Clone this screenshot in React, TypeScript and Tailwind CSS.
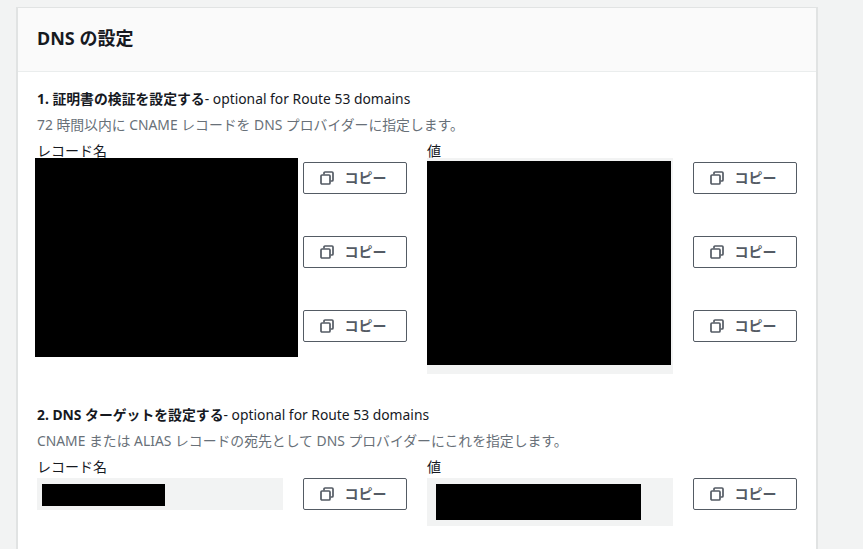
const font = 'font-["Noto_Sans","Noto_Sans_CJK_JP",sans-serif]';

function CopyButton() {
  return (
    <button className="flex h-8 w-[104px] items-center justify-center gap-[11px] rounded-[2px] border border-[#545b64] bg-white pr-1 text-[14px] leading-none font-bold text-[#545b64]">
      <svg width="14" height="14" viewBox="0 0 14 14" fill="none" stroke="#545b64" strokeWidth="1.7">
        <rect x="1" y="4" width="9" height="9" rx="1" />
        <path d="M4 3.5V2a1 1 0 0 1 1-1h7a1 1 0 0 1 1 1v7a1 1 0 0 1-1 1h-1.5" />
      </svg>
      <span>コピー</span>
    </button>
  );
}

function Label({ children }: { children: string }) {
  return <div className="h-[15px] text-[14px] leading-[15px] text-[#16191f]">{children}</div>;
}

function Section({ num, title, desc }: { num: string; title: string; desc: string }) {
  return (
    <>
      <div className="h-[20px] text-[13.85px] leading-[20px] text-[#16191f]">
        <span className="font-bold">
          {num} {title}
        </span>
        <span>- optional for Route 53 domains</span>
      </div>
      <div className="mt-[6px] h-[20px] text-[13.85px] leading-[20px] text-[#687078]">{desc}</div>
    </>
  );
}

export default function App() {
  return (
    <div className={`${font} h-[549px] w-[863px] overflow-hidden bg-[#f2f3f3] pt-[7px] pl-[16px]`}>
      <div className="h-[560px] w-[802px] border-t border-r-2 border-l-2 border-[#e1e3e3] bg-white">
        <div className="flex h-[64px] items-center border-b border-[#eaeded] bg-[#fafafa] pb-[3px] pl-[19px]">
          <h2 className="text-[18px] leading-6 font-bold text-[#16191f]">DNS の設定</h2>
        </div>

        <div className="pt-[17px] pl-[19px]">
          <Section
            num="1."
            title="証明書の検証を設定する"
            desc="72 時間以内に CNAME レコードを DNS プロバイダーに指定します。"
          />
          <div className="mt-[8px] grid grid-cols-[246px_104px_246px_104px] gap-x-5">
            <div>
              <Label>レコード名</Label>
              <div className="relative h-[199px]">
                <div className="absolute top-0 -left-[2px] h-[199px] w-[263px] bg-black" />
              </div>
            </div>
            <div className="flex flex-col gap-[42px] pt-[19px]">
              <CopyButton />
              <CopyButton />
              <CopyButton />
            </div>
            <div>
              <Label>値</Label>
              <div className="h-[216px] bg-[#f2f3f3] pt-[3px]">
                <div className="h-[204px] w-[244px] bg-black" />
              </div>
            </div>
            <div className="flex flex-col gap-[42px] pt-[19px]">
              <CopyButton />
              <CopyButton />
              <CopyButton />
            </div>
          </div>

          <div className="mt-[31px]">
            <Section
              num="2."
              title="DNS ターゲットを設定する"
              desc="CNAME または ALIAS レコードの宛先として DNS プロバイダーにこれを指定します。"
            />
          </div>
          <div className="mt-[8px] grid grid-cols-[246px_104px_246px_104px] gap-x-5">
            <div>
              <Label>レコード名</Label>
              <div className="mt-[4px] h-8 bg-[#f2f3f3] pt-[6px] pl-[5px]">
                <div className="h-[22px] w-[123px] bg-black" />
              </div>
            </div>
            <div className="pt-[19px]">
              <CopyButton />
            </div>
            <div>
              <Label>値</Label>
              <div className="mt-[4px] h-12 bg-[#f2f3f3] pt-[6px] pl-[9px]">
                <div className="h-[36px] w-[205px] bg-black" />
              </div>
            </div>
            <div className="pt-[19px]">
              <CopyButton />
            </div>
          </div>
        </div>
      </div>
    </div>
  );
}
